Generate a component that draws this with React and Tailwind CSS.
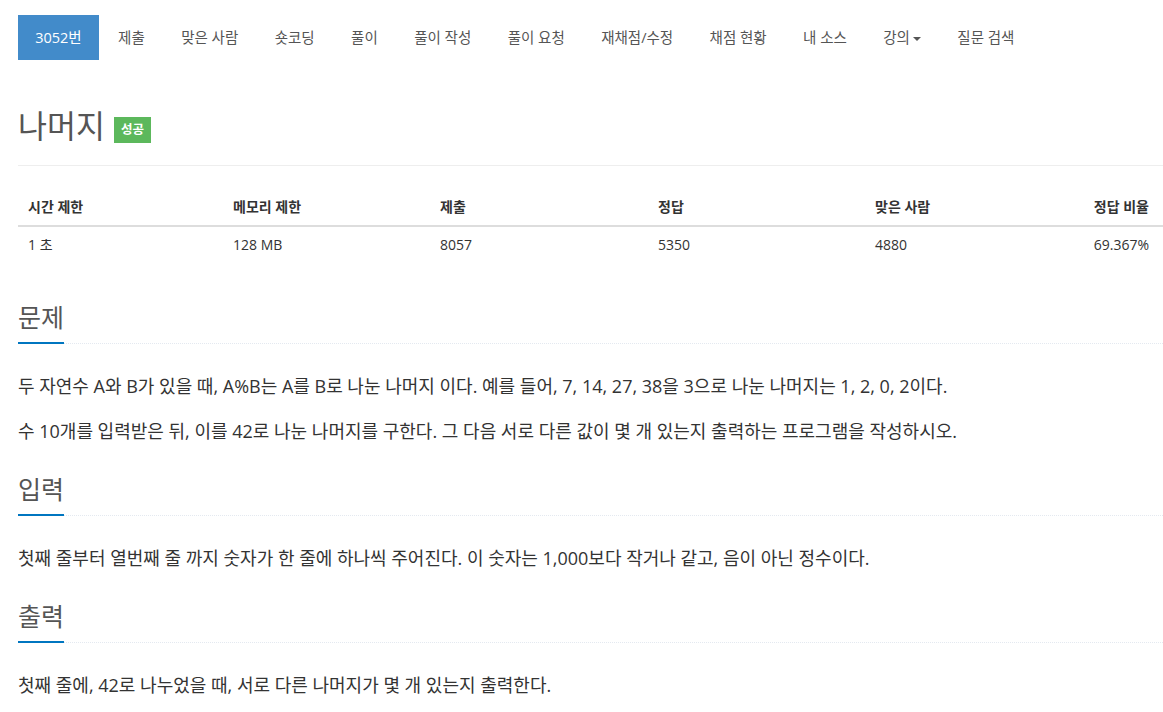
import React from "react";

const menu = [
  { label: "3052번", active: true },
  { label: "제출" },
  { label: "맞은 사람" },
  { label: "숏코딩" },
  { label: "풀이" },
  { label: "풀이 작성" },
  { label: "풀이 요청" },
  { label: "재채점/수정" },
  { label: "채점 현황" },
  { label: "내 소스" },
  { label: "강의", caret: true },
  { label: "질문 검색" },
];

const stats = [
  { key: "time", label: "시간 제한", value: "1 초", w: "w-[207px]" },
  { key: "mem", label: "메모리 제한", value: "128 MB", w: "w-[207px]" },
  { key: "sub", label: "제출", value: "8057", w: "w-[218px]" },
  { key: "ac", label: "정답", value: "5350", w: "w-[217px]" },
  { key: "users", label: "맞은 사람", value: "4880", w: "w-[217px]" },
  { key: "ratio", label: "정답 비율", value: "69.367%", w: "" },
];

const Headline = ({ title }) => (
  <div className="border-b border-dotted border-[#e4e9f0] h-[30px] box-content pb-[11px]">
    <h2 className="inline-block text-[25px] leading-[30px] text-[#555] pb-[10px] border-b-2 border-[#0076c0] font-normal">
      {title}
    </h2>
  </div>
);

const App = () => {
  return (
    <div
      className="w-full min-h-[712px] bg-white pl-[18px] text-[#333] overflow-hidden"
      style={{ fontFamily: '"Open Sans", "Noto Sans CJK KR", sans-serif' }}
    >
      {/* 문제 메뉴 */}
      <ul className="flex mt-[15px] h-[45px]">
        {menu.map((item, i) => (
          <li key={i} className={i === 0 ? "" : "ml-[2px]"}>
            <a
              className={`flex items-center h-[45px] px-[17.2px] text-[14.5px] ${
                item.active ? "bg-[#428bca] text-white" : "text-[#555]"
              }`}
            >
              {item.label}
              {item.caret && (
                <span className="ml-[3px] mt-[2px] w-0 h-0 border-t-[4px] border-t-[#555] border-x-[4px] border-x-transparent" />
              )}
            </a>
          </li>
        ))}
      </ul>

      {/* 제목 */}
      <div className="flex items-center pt-[46px] pb-[19px] border-b border-[#eee]">
        <h1 className="text-[31.5px] leading-[40px] text-[#555] font-normal">나머지</h1>
        <span className="ml-[9px] mt-[8px] px-[7px] h-[26px] flex items-center bg-[#5cb85c] text-white text-[12.5px] font-bold">
          성공
        </span>
      </div>

      {/* 제한 정보 */}
      <table className="w-full mt-[23px] text-[14px] border-collapse">
        <thead>
          <tr className="border-b-2 border-[#ddd]">
            {stats.map((s, i) => (
              <th
                key={s.key}
                className={`${s.w} py-[8px] leading-[20px] font-bold text-[#333] ${
                  i === 0 ? "pl-[10px]" : "pl-[8px]"
                } ${i === stats.length - 1 ? "text-right pr-[14px]" : "text-left"}`}
              >
                {s.label}
              </th>
            ))}
          </tr>
        </thead>
        <tbody>
          <tr>
            {stats.map((s, i) => (
              <td
                key={s.key}
                className={`py-[8px] leading-[20px] ${i === 0 ? "pl-[10px]" : "pl-[8px]"} ${
                  i === stats.length - 1 ? "text-right pr-[14px]" : "text-left"
                }`}
              >
                {s.value}
              </td>
            ))}
          </tr>
        </tbody>
      </table>

      {/* 문제 */}
      <section className="mt-[39px]">
        <Headline title="문제" />
        <div className="mt-[27px] text-[18px] leading-[30px]">
          <p className="mb-[15px]">
            두 자연수 A와 B가 있을 때, A%B는 A를 B로 나눈 나머지 이다. 예를 들어, 7, 14, 27, 38을 3으로 나눈 나머지는 1, 2, 0, 2이다.
          </p>
          <p>수 10개를 입력받은 뒤, 이를 42로 나눈 나머지를 구한다. 그 다음 서로 다른 값이 몇 개 있는지 출력하는 프로그램을 작성하시오.</p>
        </div>
      </section>

      {/* 입력 */}
      <section className="mt-[28px]">
        <Headline title="입력" />
        <div className="mt-[27px] text-[18px] leading-[30px]">
          <p>첫째 줄부터 열번째 줄 까지 숫자가 한 줄에 하나씩 주어진다. 이 숫자는 1,000보다 작거나 같고, 음이 아닌 정수이다.</p>
        </div>
      </section>

      {/* 출력 */}
      <section className="mt-[28px]">
        <Headline title="출력" />
        <div className="mt-[27px] text-[18px] leading-[30px]">
          <p>첫째 줄에, 42로 나누었을 때, 서로 다른 나머지가 몇 개 있는지 출력한다.</p>
        </div>
      </section>
    </div>
  );
};

export default App;
